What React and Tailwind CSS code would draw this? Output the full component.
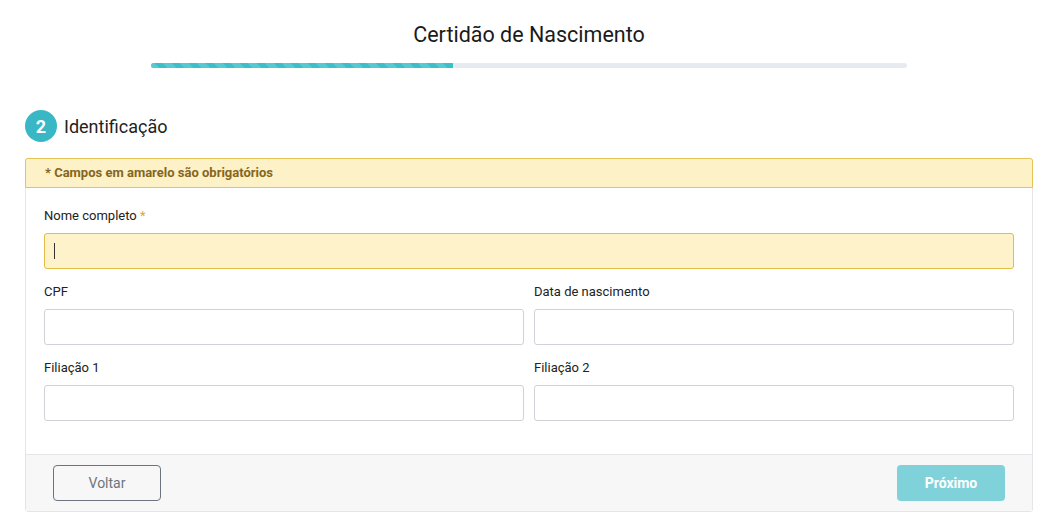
import React from 'react';

function Field({ label, required, yellow, cursor }) {
  return (
    <div className="flex flex-col">
      <label className="text-[13px] leading-4 text-[#222]">
        {label}
        {required && <span className="text-[#e0a82e]"> *</span>}
      </label>
      <div
        className={
          yellow
            ? 'mt-[9px] h-[36px] rounded-[3px] border border-[#e3bd45] bg-[#fdf2c9] flex items-center px-[9px]'
            : 'mt-[9px] h-[36px] rounded-[3px] border border-[#cfd2d6] bg-white'
        }
      >
        {cursor && <span className="block w-px h-[16px] bg-[#333]" />}
      </div>
    </div>
  );
}

export default function App() {
  return (
    <div className="min-h-[532px] bg-white font-['Roboto','Liberation_Sans',sans-serif] text-[#222]">
      {/* title + progress */}
      <div className="flex flex-col items-center pt-[22px] pr-[4px]">
        <h1 className="text-[21.5px] leading-[26px] text-[#1a1a1a]">Certidão de Nascimento</h1>
        <div className="mt-[15px] w-[756px] h-[5px] rounded-full bg-[#e7eaee] overflow-hidden">
          <div className="h-full w-[40%] bg-[#3bbfc9] bg-[repeating-linear-gradient(45deg,rgba(255,255,255,0.15)_0px,rgba(255,255,255,0.15)_6px,transparent_6px,transparent_12px)]" />
        </div>
      </div>

      {/* step heading */}
      <div className="mt-[42px] ml-[25px] flex items-center gap-[7px]">
        <div className="w-[32px] h-[32px] rounded-full bg-[#3ab7c5] text-white text-[18px] font-bold flex items-center justify-center">2</div>
        <span className="text-[18px] text-[#222]">Identificação</span>
      </div>

      {/* card */}
      <div className="mt-[16px] ml-[25px] w-[1008px] border border-[#e3e5e8] rounded-[3px]">
        <div className="h-[30px] -mx-px -mt-px bg-[#fdf1c8] border border-[#e5c455] rounded-t-[3px] flex items-center pl-[19px]">
          <span className="text-[13px] font-bold text-[#85661e]">* Campos em amarelo são obrigatórios</span>
        </div>

        <div className="px-[18px] pt-[20px] pb-[33px] flex flex-col gap-[15px]">
          <Field label="Nome completo" required yellow cursor />
          <div className="grid grid-cols-2 gap-[10px]">
            <Field label="CPF" />
            <Field label="Data de nascimento" />
          </div>
          <div className="grid grid-cols-2 gap-[10px]">
            <Field label="Filiação 1" />
            <Field label="Filiação 2" />
          </div>
        </div>

        <div className="border-t border-[#e3e5e8] bg-[#f7f7f7] h-[57px] flex items-center justify-between px-[27px]">
          <button className="w-[108px] h-[36px] rounded-[4px] border border-[#6c757d] text-[14px] text-[#6c757d] bg-transparent">Voltar</button>
          <button className="w-[108px] h-[36px] rounded-[4px] bg-[#7fd2da] text-[14px] font-bold text-white">Próximo</button>
        </div>
      </div>
    </div>
  );
}
